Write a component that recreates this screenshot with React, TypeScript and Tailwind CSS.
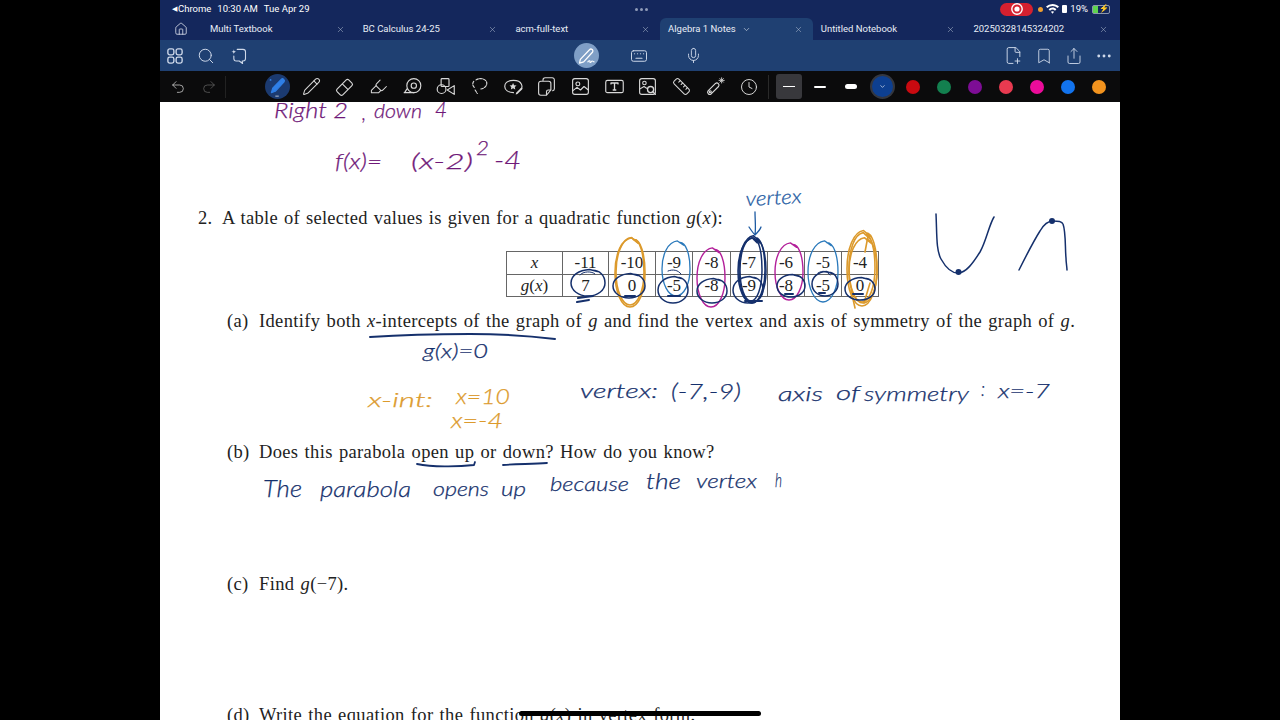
import React from "react";
import { House, X, ChevronDown, Search, Mic, FilePlus2, Bookmark, Share, Ellipsis, Undo2, Redo2, Clock, Ruler, Pencil, Highlighter } from "lucide-react";

const S = { fill: "none", stroke: "currentColor", strokeWidth: 1.3, strokeLinecap: "round" as const, strokeLinejoin: "round" as const };

function Ico({ children, w = 21, h = 21 }: { children: React.ReactNode; w?: number; h?: number }) {
  return <svg width={w} height={h} viewBox="0 0 24 24" {...S}>{children}</svg>;
}

const Grid4 = () => <Ico w={18} h={18}><rect x="2.5" y="2.5" width="8" height="8" rx="2.4" strokeWidth="1.8"/><rect x="13.5" y="2.5" width="8" height="8" rx="2.4" strokeWidth="1.8"/><rect x="2.5" y="13.5" width="8" height="8" rx="2.4" strokeWidth="1.8"/><rect x="13.5" y="13.5" width="8" height="8" rx="2.4" strokeWidth="1.8"/></Ico>;
const SparkChat = () => <Ico w={20} h={20}><path d="M11 4h7a3 3 0 0 1 3 3v8a3 3 0 0 1-3 3h-1l.5 3-4-3H10a3 3 0 0 1-3-3v-3" /><path d="M4 7c2.2-.3 2.7-.8 3-3 .3 2.2.8 2.7 3 3-2.2.3-2.7.8-3 3-.3-2.2-.8-2.700-3-3z" fill="currentColor" stroke="none"/></Ico>;
const PenScribble = () => <Ico w={20} h={20}><path d="M4 16 15 4.500a2.300 2.300 0 0 1 3.500 3L8 19l-5 1.500z" strokeWidth="1.500"/><path d="M13 19c2-2.500 3-1 2.500 0s1.500 1 2-.5 2 .5 3 .5" strokeWidth="1.300"/></Ico>;
const Keyboard = () => <Ico w={18} h={18}><rect x="2" y="5" width="20" height="14" rx="2.500"/><path d="M6 9h.1M10 9h.1M14 9h.1M18 9h.1M8 15h8" strokeWidth="1.600"/></Ico>;
const ActivePen = () => <Ico w={21} h={21}><path d="M5 19l1.500-5L16.500 3.500c1.500-1.300 4.500 1 3 3.300L9.500 17.500z" fill="#2f7fe6" stroke="#2f7fe6"/><path d="M4 4.500h.1" stroke="#2f7fe6" strokeWidth="2"/><path d="M10 23h3" stroke="#cfd6e2" strokeWidth="1"/></Ico>;
const EraserIco = () => <Ico><path d="M3.500 15 14 4.500a2 2 0 0 1 2.800 0l3.700 3.700a2 2 0 0 1 0 2.800L10 21.500a2 2 0 0 1-2.800 0l-3.700-3.700a2 2 0 0 1 0-2.800zM9.500 9l6 6"/></Ico>;
const Tape = () => <Ico><circle cx="13.500" cy="11" r="8"/><circle cx="13.500" cy="11" r="3"/><path d="M2.500 19h11M5.500 15l-2.500 4"/></Ico>;
const Shapes = () => <Ico><rect x="7" y="3" width="9" height="9" rx="1"/><circle cx="7.500" cy="15" r="5"/><path d="M22 11v10l-8-5z"/></Ico>;
const Lasso = () => <Ico><path d="M8 4.500c3-2.500 10-2 12 2 1.500 4-2 8-7.500 8.500" strokeDasharray="3 1.500"/><path d="M6 13c-2-2-2.500-5 0-7.500M7 16l2.500 4" strokeDasharray="3 1.500"/></Ico>;
const StarBubble = () => <Ico><path d="M20 16c3-3 2.500-11-8-11C4 5 2 9 2 12c0 4 4 7 10 7" /><path d="m11.500 8 1.200 2.500 2.800.3-2 1.900.5 2.800-2.500-1.400-2.500 1.400.5-2.800-2-1.900 2.800-.3z" fill="currentColor" stroke="none"/><path d="m15 19 6-6 1.500 1.500-6 6-2 .5z" fill="currentColor" stroke="none"/></Ico>;
const Copy = () => <Ico><path d="M8 5V4.500A2.500 2.500 0 0 1 10.500 2h8A2.500 2.500 0 0 1 21 4.500v10a2.500 2.500 0 0 1-2 2.400"/><path d="M5.500 6h9A2.500 2.500 0 0 1 17 8.500V16l-5 6H5.500A2.500 2.500 0 0 1 3 19.500v-11A2.500 2.500 0 0 1 5.500 6zM17 16h-3a2 2 0 0 0-2 2v4"/></Ico>;
const Pic = () => <Ico><rect x="3" y="3" width="18" height="18" rx="2.500"/><circle cx="9" cy="9" r="2.200"/><path d="m3 17 5-4 4 3 4-4 5 4"/></Ico>;
const TextBox = () => <Ico><rect x="2" y="5" width="20" height="14" rx="2"/><path d="M8 9V8h8v1M12 8v8M10.500 16h3" strokeWidth="1.500"/></Ico>;
const PicSearch = () => <Ico><rect x="3" y="3" width="18" height="18" rx="2.500"/><circle cx="8.500" cy="8" r="2"/><path d="m3 15 5-3 3 2"/><circle cx="15.500" cy="15.500" r="3.500" strokeWidth="1.500"/><path d="m18 18 3 3" strokeWidth="1.500"/></Ico>;
const Laser = () => <Ico><path d="M3.500 17 12 8.500a2.500 2.500 0 0 1 3.500 3.500L7 20.500a2.500 2.500 0 0 1-3.500-3.500z"/><circle cx="6" cy="18" r="1.200"/><path d="M19 2v6M16 5h6M17 3l4 4M21 3l-4 4" strokeWidth="1"/></Ico>;
const Rec = () => <svg width="14" height="14" viewBox="0 0 14 14"><circle cx="7" cy="7" r="5.200" fill="none" stroke="#fff" strokeWidth="1.400"/><circle cx="7" cy="7" r="2.600" fill="#fff"/></svg>;
const Wifi = () => <svg width="13" height="10" viewBox="0 0 13 10" fill="#fff"><path d="M6.500 0C9 0 11.200 1 13 2.600l-1.400 1.500A7.500 7.500 0 0 0 6.500 2 7.500 7.500 0 0 0 1.400 4.100L0 2.600A9.600 9.600 0 0 1 6.500 0z"/><path d="M6.500 3.600c1.500 0 2.900.6 3.900 1.600L9 6.700a3.700 3.700 0 0 0-5 0L2.600 5.200a5.600 5.600 0 0 1 3.900-1.600zM6.500 7.200c.7 0 1.200.2 1.600.6L6.500 9.800 4.900 7.800c.4-.4 1-.6 1.600-.6z"/></svg>;

const tabs = ["Multi Textbook", "BC Calculus 24-25", "acm-full-text", "Algebra 1 Notes", "Untitled Notebook", "20250328145324202"];
const tools = [<ActivePen />, <Pencil size={19} strokeWidth={1.3} />, <EraserIco />, <Highlighter size={19} strokeWidth={1.3} />, <Tape />, <Shapes />, <Lasso />, <StarBubble />, <Copy />, <Pic />, <TextBox />, <PicSearch />, <Ruler size={19} strokeWidth={1.3} />, <Laser />, <Clock size={18} strokeWidth={1.3} />];
const colors = ["bg-[#c80a10]", "bg-[#13804f]", "bg-[#7d0d95]", "bg-[#e83a50]", "bg-[#ec0c9a]", "bg-[#1273ee]", "bg-[#f2931e]"];

const NAVY = "#15306c", ORANGE = "#dc9a2c", BLUE = "#2a79bb", MAG = "#b3209a", PUR = "#6f1878";

function loop(cx: number, cy: number, rx: number, ry: number) {
  const k = 0.56;
  return `M${cx + rx * 0.25} ${cy - ry * 0.98} C${cx + rx * k + 2} ${cy - ry} ${cx + rx} ${cy - ry * k} ${cx + rx} ${cy} C${cx + rx} ${cy + ry * k} ${cx + rx * k} ${cy + ry} ${cx} ${cy + ry} C${cx - rx * k} ${cy + ry} ${cx - rx} ${cy + ry * k} ${cx - rx} ${cy} C${cx - rx} ${cy - ry * k} ${cx - rx * k} ${cy - ry} ${cx + rx * 0.1} ${cy - ry * 1.04} L${cx + rx * 0.55} ${cy - ry * 0.88}`;
}

type Ink = [string, number, number, number, string, number?, number?];
const inkText: Ink[] = [
  ["Right 2", 274, 118, 74, PUR, 22],
  [",", 362, 120, 4, PUR, 22],
  ["down", 374, 118, 48, PUR, 19],
  ["4", 435, 117, 12, PUR, 22],
  ["f(x)=", 335, 169, 47, PUR, 21],
  ["(x-2)", 411, 169, 62, PUR, 22],
  ["2", 476, 155, 13, PUR, 20],
  ["-4", 494, 169, 27, PUR, 26],
  ["vertex", 746, 206, 56, "#1d5aa2", 20, -3],
  ["g(x)=0", 423, 358, 65, NAVY, 19],
  ["x-int:", 368, 407, 65, ORANGE, 20],
  ["x=10", 456, 404, 54, ORANGE, 21],
  ["x=-4", 451, 428, 52, ORANGE, 21],
  ["vertex:", 580, 398, 78, NAVY, 20],
  ["(-7,-9)", 671, 399, 70, NAVY, 21],
  ["axis", 778, 401, 45, NAVY, 19],
  ["of", 836, 400, 24, NAVY, 20],
  ["symmetry", 864, 401, 105, NAVY, 20],
  [":", 981, 396, 4, NAVY, 20],
  ["x=-7", 998, 398, 52, NAVY, 20],
  ["The", 263, 497, 39, NAVY, 24],
  ["parabola", 320, 497, 91, NAVY, 22],
  ["opens", 433, 496, 56, NAVY, 19],
  ["up", 501, 496, 25, NAVY, 19],
  ["because", 550, 491, 79, NAVY, 20],
  ["the", 646, 489, 35, NAVY, 21],
  ["vertex", 696, 488, 61, NAVY, 19],
  ["h", 775, 487, 7, NAVY, 20],
];

function InkLayer() {
  const s = (c: string, w = 1.4) => ({ fill: "none", stroke: c, strokeWidth: w, strokeLinecap: "round" as const, strokeLinejoin: "round" as const });
  return (
    <svg className="absolute inset-0" width="960" height="618" viewBox="160 102 960 618">
      <g {...s(ORANGE, 1.6)}>
        <path d={loop(630, 273, 15, 34)} />
        <path d={loop(630, 272, 14, 33)} />
        <path d={loop(862, 269, 15, 37)} />
        <path d={loop(862, 268, 13, 34)} />
        <path d={loop(863, 271, 14, 32)} />
        <path d="M868 236l-3 16M870 283l-6 20M851 290l4 18" />
      </g>
      <g {...s(BLUE, 1.3)}>
        <path d={loop(676, 269, 14, 27)} />
        <path d={loop(823, 272, 15, 30)} />
      </g>
      <g {...s(MAG, 1.4)}>
        <path d={loop(711, 278, 14, 29)} />
        <path d={loop(789, 272, 14, 28)} />
      </g>
      <g {...s(NAVY, 1.5)}>
        <path d={loop(588, 283, 17, 13)} />
        <path d={loop(629, 286, 16, 12)} />
        <path d={loop(673, 290, 15, 13)} />
        <path d={loop(712, 291, 15, 12)} />
        <path d={loop(752, 270, 13, 33)} />
        <path d={loop(751, 270, 11, 31)} />
        <path d={loop(752, 271, 14, 32)} />
        <path d={loop(748, 290, 15, 13)} />
        <path d={loop(791, 286, 14, 11)} />
        <path d={loop(825, 284, 13, 12)} />
        <path d={loop(860, 289, 15, 11)} />
        <path d="M745 301h17M578 298l15-2M577 302l12-2M625 296h10M668 296h12M785 294h8M819 293h6M853 294h10" strokeWidth="2" />
        <path d="M580 275c3-4 12-4 15-1M668 271c5-2 10-1 13 3M818 273c5-3 9-2 12 2" strokeWidth="1" />
        <path d="M370 337c30-2 70-3 100-3s60 2 85 5" strokeWidth="2" />
        <path d="M417 464c15 3 40 3 57 1l1-3" strokeWidth="1.800" />
        <path d="M503 465c15-1 30-1 44-2" strokeWidth="1.800" />
        <path d="M936 214c1 20 0 36 5 45 5 9 11 14 17 14 8 0 15-10 22-21 6-10 9-27 14-35" />
        <path d="M1019 270c7-14 14-28 21-39 4-7 8-10 13-10 5 0 9 0 10 3 3 8 2 25 3 34 0 5 1 9 1 12" />
      </g>
      <circle cx="958.500" cy="272" r="3" fill={NAVY} />
      <circle cx="1052" cy="221" r="3" fill={NAVY} />
      <path d="M755 212c0 8 1 15 0 23M749 227c2 3 4 6 6 8 2-2 5-5 6-8" {...s("#1d5aa2", 1.3)} />
      {inkText.map(([t, x, y, w, c, size, rot]) => (
        <text key={t + x} x={x} y={y} textLength={w} lengthAdjust="spacingAndGlyphs" fill={c} stroke={c} strokeWidth={0.25} fontSize={size} fontStyle="italic" fontWeight={300} fontFamily="Lato, 'Open Sans', sans-serif" transform={rot ? `rotate(${rot} ${x} ${y})` : undefined}>{t}</text>
      ))}
    </svg>
  );
}

const M = ({ children }: { children: React.ReactNode }) => <i>{children}</i>;

function Row({ label, children, sub }: { label: string; children: React.ReactNode; sub?: boolean }) {
  return (
    <div className={`flex h-6 items-center whitespace-nowrap text-[18.500px] text-[#222] ${sub ? "pl-[29px] tracking-[0.35px] [word-spacing:1.2px]" : "tracking-[0.3px] [word-spacing:1px]"}`}>
      <span className={sub ? "w-[32px]" : "w-[24px]"}>{label}</span>
      <span>{children}</span>
    </div>
  );
}

export default function App() {
  const head = [ "-11", "-10", "-9", "-8", "-7", "-6", "-5", "-4" ];
  const vals = [ "7", "0", "-5", "-8", "-9", "-8", "-5", "0" ];
  const widths = ["w-[46px]", "w-[47px]", "w-[37px]", "w-[38px]", "w-[37px]", "w-[37px]", "w-[37px]", "w-[37px]"];
  return (
    <div className="flex h-[720px] w-[1280px] justify-center overflow-hidden bg-black font-['Roboto',sans-serif]">
      <div className="relative flex w-[960px] flex-col">
        <header className="flex h-[18px] items-center bg-[#14275c] pl-[12px] pr-[10px] text-[9.500px] text-white">
          <span className="flex w-[461px] items-center gap-[6px]">
            <span className="flex items-center gap-[1px]"><span className="text-[7px]">◀</span>Chrome</span>
            <span>10:30 AM</span><span>Tue Apr 29</span>
          </span>
          <span className="flex w-[16px] justify-center gap-[2px]">
            <span className="h-[3px] w-[3px] rounded-full bg-[#8f9bb8]" /><span className="h-[3px] w-[3px] rounded-full bg-[#8f9bb8]" /><span className="h-[3px] w-[3px] rounded-full bg-[#8f9bb8]" />
          </span>
          <span className="ml-auto flex items-center gap-[3px]">
            <span className="flex h-[13px] w-[33px] items-center justify-center rounded-full bg-[#d5202f]"><Rec /></span>
            <span className="ml-[2px] h-[5px] w-[5px] rounded-full bg-[#f0a030]" />
            <Wifi />
            <span className="h-[8px] w-[5px] rounded-[1px] bg-white" />
            <span>19%</span>
            <span className="relative ml-[1px] flex h-[9px] w-[18px] items-center rounded-[2px] border border-[#8b96ae]">
              <span className="h-full w-[5px] bg-[#5fd34f]" />
              <span className="absolute left-[6px] text-[8px] leading-none">⚡</span>
            </span>
          </span>
        </header>

        <nav className="flex h-[22px] items-stretch bg-[#14275c] text-[9.500px] text-[#e8edf6]">
          <div className="flex w-[42px] items-center justify-center"><House size={14} strokeWidth={1.3} /></div>
          {tabs.map((t, i) => (
            <div key={t} className={`relative flex w-[152.700px] items-center pl-[8px] pr-[10px] ${i === 3 ? "rounded-t-[6px] bg-[#1f4072]" : ""}`}>
              <span>{t}</span>
              {i === 3 && <ChevronDown size={9} strokeWidth={1.500} className="ml-[6px]" />}
              <X size={9} strokeWidth={1.300} className="ml-auto text-[#b7c2d6]" />
            </div>
          ))}
        </nav>

        <div className="flex h-[31px] items-center bg-[#1f4072] text-[#cfd9ea]">
          <div className="flex w-[104px] items-center gap-[13px] pl-[6px]">
            <Grid4 /><Search size={18} strokeWidth={1.300} /><SparkChat />
          </div>
          <div className="ml-[310px] flex h-[25px] w-[25px] items-center justify-center rounded-full bg-[#7f9fc6] text-white"><PenScribble /></div>
          <div className="ml-[31px]"><Keyboard /></div>
          <div className="ml-[37px]"><Mic size={17} strokeWidth={1.300} /></div>
          <div className="ml-auto flex items-center gap-[12px] pr-[7px]">
            <FilePlus2 size={19} strokeWidth={1.200} /><Bookmark size={18} strokeWidth={1.200} /><Share size={18} strokeWidth={1.200} /><Ellipsis size={18} strokeWidth={1.800} />
          </div>
        </div>

        <div className="flex h-[31px] items-center bg-[#0b0b0c] text-[#d8d8d8]">
          <div className="flex w-[66px] shrink-0 items-center pl-[10px]">
            <Undo2 size={16} strokeWidth={1.100} className="shrink-0" />
            <Redo2 size={16} strokeWidth={1.100} className="ml-[15px] shrink-0 text-[#666]" />
            <span className="ml-[8px] h-[22px] w-px shrink-0 bg-[#222]" />
          </div>
          <div className="ml-[34.500px] flex items-center">
            {tools.map((icon, i) => (
              <div key={i} className="flex w-[33.700px] items-center justify-center">
                {i === 0 ? <span className="flex h-[25px] w-[25px] items-center justify-center rounded-full bg-[#1b3a70]">{icon}</span> : icon}
              </div>
            ))}
          </div>
          <span className="ml-[2px] h-[24px] w-px bg-[#2a2a2a]" />
          <div className="ml-[7px] flex h-[25px] w-[26px] items-center justify-center rounded-[3px] bg-[#38383c]"><span className="h-px w-[12px] bg-white" /></div>
          <div className="flex w-[36px] justify-center"><span className="h-[2px] w-[12px] rounded-full bg-white" /></div>
          <div className="flex w-[26px] justify-center"><span className="h-[5px] w-[12px] rounded-full bg-white" /></div>
          <div className="ml-[8px] flex h-[21px] w-[21px] items-center justify-center rounded-full bg-[#0d3f90] ring-2 ring-[#34373f]"><ChevronDown size={7} strokeWidth={2} className="text-white" /></div>
          <div className="ml-[13px] flex items-center gap-[17px]">
            {colors.map((c) => <span key={c} className={`h-[14px] w-[14px] rounded-full ${c}`} />)}
          </div>
        </div>

        <main className="relative flex-1 overflow-hidden bg-white pl-[38px] pt-[105px] font-['Liberation_Serif',serif]">
          <Row label="2."><span>A table of selected values is given for a quadratic function <M>g</M>(<M>x</M>):</span></Row>
          <table className="ml-[308px] mt-[20px] table-fixed border-collapse text-center text-[17px] leading-none text-[#222]">
            <tbody>
              <tr className="h-[22.500px]">
                <td className="w-[56px] border border-[#666]"><M>x</M></td>
                {head.map((h, i) => <td key={i} className={`${widths[i]} border border-[#666]`}>{h}</td>)}
              </tr>
              <tr className="h-[22.500px]">
                <td className="border border-[#666]"><M>g</M>(<M>x</M>)</td>
                {vals.map((h, i) => <td key={i} className="border border-[#666]">{h}</td>)}
              </tr>
            </tbody>
          </table>
          <div className="mt-[13px]"><Row sub label="(a)">Identify both <M>x</M>-intercepts of the graph of <M>g</M> and find the vertex and axis of symmetry of the graph of <M>g</M>.</Row></div>
          <div className="mt-[107px]"><Row sub label="(b)">Does this parabola open up or down? How do you know?</Row></div>
          <div className="mt-[108px]"><Row sub label="(c)">Find <M>g</M>(−7).</Row></div>
          <div className="mt-[107px]"><Row sub label="(d)">Write the equation for the function <M>g</M>(<M>x</M>) in vertex form.</Row></div>
          <InkLayer />
        </main>

        <div className="absolute left-[359px] top-[711px] h-[5px] w-[242px] rounded-full bg-black" />
      </div>
    </div>
  );
}
